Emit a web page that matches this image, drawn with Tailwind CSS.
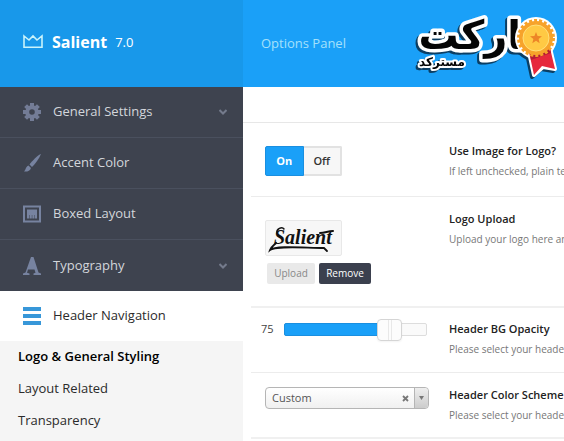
<!DOCTYPE html>
<html lang="en">
<head>
    <meta charset="UTF-8">
    <meta name="viewport" content="width=device-width, initial-scale=1.0">
    <title>Salient Options Panel</title>
    <script src="https://cdn.jsdelivr.net/npm/@tailwindcss/browser@4"></script>
</head>
<body class="flex flex-col h-screen overflow-hidden bg-white font-['Open_Sans',sans-serif]">

    <!-- Top bar -->
    <header class="flex shrink-0 h-[87px] bg-[#1aa0f8]">
        <div class="flex items-center shrink-0 w-[243px] pl-[23px] pb-[3px] bg-[#1898ea] text-white">
            <svg class="w-5 h-4 mr-[9px]" viewBox="0 0 20 16" fill="none" stroke="#c9f3fb" stroke-width="1.6">
                <path d="M1 2 L6 6 L10 2 L14 6 L19 2 V13.200 H1 Z"/>
            </svg>
            <h1 class="text-base font-bold">Salient</h1>
            <span class="ml-2 mt-[2px] text-[13px]">7.0</span>
        </div>
        <div class="relative flex items-center flex-1 pl-[18px]">
            <p class="text-[13px] text-[#a5e0fb]">Options Panel</p>
            <a href="#" aria-label="مارکت مسترکد" class="absolute right-0 top-0">
                <svg class="w-[164px] h-[87px] drop-shadow-[-2px_2px_0_#0b3e63]" viewBox="0 0 164 87" font-family="'DejaVu Sans', sans-serif" font-weight="bold" direction="rtl">
                    <g stroke-linejoin="round" paint-order="stroke" fill="#050505" stroke="#fff">
                        <text x="147" y="49" font-size="40" stroke-width="7">مارکت</text>
                        <text x="65" y="66" font-size="12" stroke-width="4">مسترکد</text>
                    </g>
                    <!-- medal -->
                    <path d="M129 52 L134 75 L143 67 L155 69 L150 48 Z" fill="#e6283c" stroke="#fff" stroke-width="4" stroke-linejoin="round"/>
                    <circle cx="136" cy="38" r="21" fill="#fff"/>
                    <path d="M129 52 L134 75 L142 66 L155 69 L150 48 Z" fill="#e6283c"/>
                    <path d="M130 54 L131 60 L151 53 L150 48 Z" fill="#b51d35"/>
                    <circle cx="136" cy="38" r="17" fill="#f7a32b"/>
                    <circle cx="136" cy="38" r="17.500" fill="none" stroke="#f7a32b" stroke-width="3" stroke-dasharray="3 2"/>
                    <circle cx="136" cy="38" r="13" fill="#ffc944" stroke="#ffe07a" stroke-width="1"/>
                    <path d="M136 32 L137.600 36 L142 36.200 L138.600 39 L139.700 43.200 L136 40.800 L132.300 43.200 L133.400 39 L130 36.200 L134.400 36 Z" fill="#ed8527"/>
                </svg>
            </a>
        </div>
    </header>

    <div class="flex flex-1 min-h-0">

        <!-- Sidebar -->
        <nav class="flex flex-col shrink-0 w-[243px] bg-[#f5f5f5] text-[13px]">
            <ul class="bg-[#3e434f] text-[#d3d6db]">
                <li>
                    <a href="#" class="flex items-center h-[51px] pl-[23px] pr-4 border-b border-[#4a505e]">
                        <svg class="w-[18px] h-[18px] mr-3" viewBox="0 0 18 18">
                            <circle cx="9" cy="9" r="4.800" fill="none" stroke="#737c96" stroke-width="4"/>
                            <g stroke="#737c96" stroke-width="4">
                                <path d="M9 0V4M9 14V18M0 9H4M14 9H18M2.600 2.600L5 5M13 13L15.400 15.400M2.600 15.400L5 13M13 5L15.400 2.600"/>
                            </g>
                        </svg>
                        General Settings
                        <svg class="w-2 h-2 ml-auto" viewBox="0 0 8 8" fill="none" stroke="#747b8c" stroke-width="2"><path d="M.5 2L4 5.500L7.500 2"/></svg>
                    </a>
                </li>
                <li>
                    <a href="#" class="flex items-center h-[51px] pl-[23px] pr-4 border-b border-[#4a505e]">
                        <svg class="w-[18px] h-[18px] mr-3" viewBox="0 0 18 18" fill="#7783a0">
                            <path d="M18 0 C15 1 9 7 6.500 10.500 L9 13 C12 10 16 5 18 0 Z"/>
                            <path d="M5.500 11.500 L8 14 C7 17 4 18 1 17.500 C3 16 2.500 12.500 5.500 11.500 Z"/>
                        </svg>
                        Accent Color
                    </a>
                </li>
                <li>
                    <a href="#" class="flex items-center h-[51px] pl-[23px] pr-4 border-b border-[#4a505e]">
                        <svg class="w-[18px] h-[18px] mr-3" viewBox="0 0 18 18">
                            <rect x="1" y="1.500" width="16" height="15" fill="none" stroke="#7783a0" stroke-width="2"/>
                            <path d="M4 4.500H14V10H4Z M4 10H6.500V13.500H4ZM7 10H8.800V13.500H7ZM9.300 10H11V13.500H9.300ZM11.500 10H14V13.500H11.500Z" fill="#7783a0"/>
                        </svg>
                        Boxed Layout
                    </a>
                </li>
                <li>
                    <a href="#" class="flex items-center h-[51px] pl-[23px] pr-4">
                        <svg class="w-[18px] h-[18px] mr-3" viewBox="0 0 18 18" fill="#7783a0">
                            <path d="M8 0H10.500L15.500 15.500L18 16.500V18H10.500V16.500L12.500 15.800L11.500 12.500H5L4 15.800L6.500 16.500V18H0V16.500L2.500 15.500Z"/>
                        </svg>
                        Typography
                        <svg class="w-2 h-2 ml-auto" viewBox="0 0 8 8" fill="none" stroke="#747b8c" stroke-width="2"><path d="M.5 2L4 5.500L7.500 2"/></svg>
                    </a>
                </li>
            </ul>
            <a href="#" class="flex items-center h-[50px] pl-[23px] bg-white text-[#2b2b2b]">
                <svg class="w-[18px] h-[18px] mr-3" viewBox="0 0 18 18" fill="#3797d9">
                    <path d="M0 0H18V4H0ZM0 7H18V11H0ZM0 14H18V18H0Z"/>
                </svg>
                Header Navigation
            </a>
            <ul class="text-[#2b2b2b]">
                <li><a href="#" class="flex items-center h-8 pl-[18px] font-semibold text-black">Logo &amp; General Styling</a></li>
                <li><a href="#" class="flex items-center h-8 pl-[18px]">Layout Related</a></li>
                <li><a href="#" class="flex items-center h-8 pl-[18px]">Transparency</a></li>
            </ul>
        </nav>

        <!-- Options -->
        <main class="flex-1 min-w-0 overflow-hidden text-[11px] text-[#444]">
            <div class="h-9 border-b border-[#e7e7e7]"></div>

            <section class="flex h-[74px] ml-2 border-b border-[#ececec]">
                <div class="shrink-0 w-[198px] pl-[14px] pt-[23px]">
                    <fieldset class="flex w-[77px] h-[30px] font-semibold" aria-label="Use Image for Logo?">
                        <label class="flex-1 flex items-center justify-center rounded-l-xs border border-[#1a8fe0] bg-[#1aa0f8] text-white font-bold">
                            <input type="radio" name="logo" class="sr-only" checked>On
                        </label>
                        <label class="flex-1 flex items-center justify-center rounded-r-xs border-2 border-l-0 border-[#e2e2e2] bg-[#f7f7f7] text-[#333]">
                            <input type="radio" name="logo" class="sr-only">Off
                        </label>
                    </fieldset>
                </div>
                <div class="pt-5 whitespace-nowrap">
                    <h2 class="leading-4 font-semibold text-[#222]">Use Image for Logo?</h2>
                    <p class="mt-1 text-[10px] leading-4 text-[#777]">If left unchecked, plain tex</p>
                </div>
            </section>

            <section class="flex h-[111px] ml-2 border-b-2 border-[#f0f0f0]">
                <div class="shrink-0 w-[198px] pl-[14px] pt-[23px]">
                    <div class="flex w-[77px] h-9 rounded-xs border border-[#e8e8e8] bg-[#f7f7f7]">
                        <svg class="w-full h-full" viewBox="0 0 75 34" fill="none" stroke="#111" stroke-linecap="round">
                            <text x="8" y="23" font-family="'Liberation Serif', serif" font-size="20" font-weight="bold" font-style="italic" fill="#111" stroke="none">Salient</text>
                            <path d="M10 22 C8 24 5 26 4 29 C10 24 40 27 58 27 L61 30" stroke-width="1.800"/>
                            <path d="M18 8 C16 5 10 8 11 12" stroke-width="1.500"/>
                            <path d="M54 12 C59 12 62 10 67 10" stroke-width="2"/>
                        </svg>
                    </div>
                    <div class="flex gap-1 mt-[7px] pl-[2px] text-[10px]">
                        <button type="button" class="w-12 h-[21px] rounded-xs bg-[#e9e9e9] text-[#888]">Upload</button>
                        <button type="button" class="w-[52px] h-[21px] rounded-xs bg-[#3b404e] text-white">Remove</button>
                    </div>
                </div>
                <div class="pt-[14px] whitespace-nowrap">
                    <h2 class="leading-4 font-semibold text-[#222]">Logo Upload</h2>
                    <p class="mt-1 text-[10px] leading-4 text-[#777]">Upload your logo here an</p>
                </div>
            </section>

            <section class="flex h-[65px] ml-2 border-b border-[#ececec]">
                <div class="flex items-start shrink-0 w-[198px] pl-[10px] pt-[13px]">
                    <output for="opacity" class="w-[23px] leading-4">75</output>
                    <div class="relative w-[143px] h-[13px] mt-[2px] rounded-xs border border-[#ddd] bg-[#fafafa]">
                        <div class="h-[13px] -mt-px -ml-px rounded-l-xs bg-[#1aa0f8] border border-[#1a8fe0]" style="width: 75%"></div>
                        <input id="opacity" type="range" min="0" max="100" value="75" class="absolute -left-[15px] -top-[6px] w-[167px] h-[23px] appearance-none bg-transparent [&::-webkit-slider-thumb]:appearance-none [&::-webkit-slider-thumb]:w-[25px] [&::-webkit-slider-thumb]:h-[22px] [&::-webkit-slider-thumb]:rounded-sm [&::-webkit-slider-thumb]:border [&::-webkit-slider-thumb]:border-[#d5d5d5] [&::-webkit-slider-thumb]:bg-[linear-gradient(90deg,#fcfcfc_10px,#e8e8e8_10px,#e8e8e8_11px,#fcfcfc_11px,#fcfcfc_13px,#e8e8e8_13px,#e8e8e8_14px,#fcfcfc_14px)] [&::-webkit-slider-thumb]:shadow-xs">
                    </div>
                </div>
                <div class="pt-[13px] whitespace-nowrap">
                    <label for="opacity" class="block leading-4 font-semibold text-[#222]">Header BG Opacity</label>
                    <p class="mt-1 text-[10px] leading-4 text-[#777]">Please select your header</p>
                </div>
            </section>

            <section class="flex h-[66px] ml-2 border-b-2 border-[#f0f0f0]">
                <div class="shrink-0 w-[198px] pl-[14px] pt-[14px]">
                    <div class="relative w-[164px]">
                        <select id="scheme" class="block w-full h-[22px] pl-[6px] appearance-none rounded-sm border border-[#b5b5b5] bg-linear-to-b from-white to-[#f0f0f0] text-[#555]">
                            <option>Custom</option>
                            <option>Light</option>
                            <option>Dark</option>
                        </select>
                        <button type="button" aria-label="Clear" class="absolute right-[20px] top-[8px]">
                            <svg class="w-[7px] h-[7px]" viewBox="0 0 7 7" stroke="#777" stroke-width="1.800"><path d="M1 1L6 6M6 1L1 6"/></svg>
                        </button>
                        <span class="absolute right-px top-px flex items-center justify-center w-[14px] h-5 rounded-r-sm border-l border-[#b5b5b5] bg-linear-to-b from-[#eee] to-[#ccc] pointer-events-none">
                            <svg class="w-[5px] h-1" viewBox="0 0 5 4" fill="#777"><path d="M0 0H5L2.500 4Z"/></svg>
                        </span>
                    </div>
                </div>
                <div class="pt-[14px] whitespace-nowrap">
                    <label for="scheme" class="block leading-4 font-semibold text-[#222]">Header Color Scheme</label>
                    <p class="mt-1 text-[10px] leading-4 text-[#777]">Please select your header</p>
                </div>
            </section>
        </main>
    </div>
</body>
</html>
